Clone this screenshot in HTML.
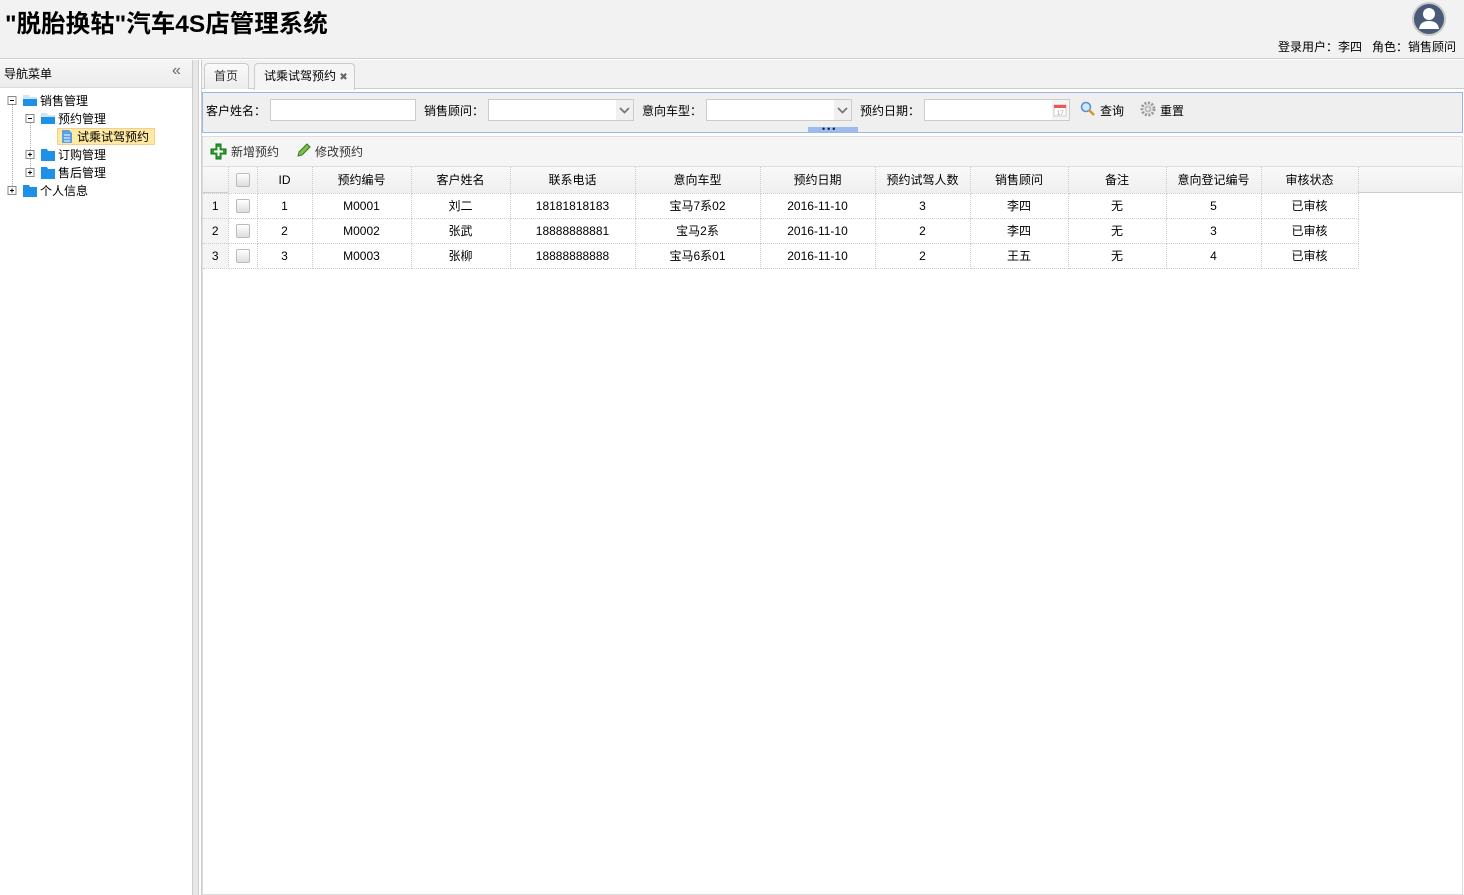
<!DOCTYPE html>
<html><head><meta charset="utf-8"><style>
*{margin:0;padding:0;box-sizing:border-box}
body{width:1464px;height:895px;overflow:hidden;background:#fff;font-family:"Liberation Sans","Noto Sans CJK SC",sans-serif;font-size:12px;color:#000;position:relative}
.a{position:absolute}
.tx{white-space:nowrap;line-height:14px}
.inp{position:absolute;background:#fff;border:1px solid #ccc;height:22px}
.dd{position:absolute;right:0;top:0;width:17px;height:20px;background:#f0f0f0}
table{border-collapse:collapse;position:absolute;left:203px;top:167px;font-size:12px}
td{border:1px dotted #ccc;text-align:center;height:25px;padding:0}
tr.h td{background:linear-gradient(#f9f9f9,#efefef);height:26px;border-top:none}
td.rn{background:#f4f4f4;border-left:none}
.ck{display:inline-block;width:14px;height:14px;border:1px solid #bbb;border-radius:2px;background:linear-gradient(#fff,#ddd);vertical-align:middle}
</style></head><body>
<div class="a" style="left:0;top:0;width:1464px;height:59px;background:#f2f2f2;border-bottom:1px solid #d0d0d0"></div>
<div class="a tx" style="left:5px;top:11px;font-size:24.5px;font-weight:bold;line-height:28px">"脱胎换轱"汽车4S店管理系统</div>
<svg class="a" style="left:1411px;top:1px" width="36" height="36"><circle cx="18" cy="18" r="17" fill="#c8c8c8"/><circle cx="18" cy="18" r="15" fill="#4b5b77"/><circle cx="18" cy="13" r="6" fill="#fff"/><path d="M8 28 Q9 20 18 20 Q27 20 28 28 Z" fill="#fff"/></svg>
<div class="a tx" style="left:1278px;top:40px">登录用户：李四&nbsp;&nbsp;&nbsp;角色：销售顾问</div>
<div class="a" style="left:0;top:60px;width:193px;height:835px;border-right:1px solid #ccc;background:#fff"></div>
<div class="a" style="left:0;top:60px;width:192px;height:28px;background:linear-gradient(#f6f6f6,#ececec);border-bottom:1px solid #ddd"></div>
<div class="a tx" style="left:4px;top:67px">导航菜单</div>
<div class="a tx" style="left:172px;top:64px;font-size:16px;color:#666">«</div>
<div class="a" style="left:193px;top:60px;width:6px;height:835px;background:#e8e8e8;border-right:1px solid #ccc"></div>
<div class="a" style="left:12px;top:104px;height:86px;border-left:1px dotted #aaa"></div>
<div class="a" style="left:30px;top:122px;height:50px;border-left:1px dotted #aaa"></div>
<svg class="a" style="left:0;top:90px" width="160" height="110">
<g fill="#fff" stroke="#888"><rect x="8" y="6.5" width="8" height="8"/><rect x="26" y="24.5" width="8" height="8"/><rect x="26" y="60.5" width="8" height="8"/><rect x="26" y="78.5" width="8" height="8"/><rect x="8" y="96.5" width="8" height="8"/></g>
<g stroke="#000"><path d="M10 10.5h4M28 28.5h4M28 64.5h4M30 62.5v4M28 82.5h4M30 80.5v4M10 100.5h4M12 98.5v4"/></g>
<g fill="#1e90e8"><path d="M23 5h6l1 2h7v9H23z" fill="#cfe4f6"/><rect x="23" y="9" width="14" height="7"/><path d="M41 23h6l1 2h7v9H41z" fill="#cfe4f6"/><rect x="41" y="27" width="14" height="7"/>
<path d="M41 59h6l1 2h7v10H41z"/><path d="M41 77h6l1 2h7v10H41z"/><path d="M23 95h6l1 2h7v10H23z"/></g>
</svg>
<div class="a" style="left:57px;top:128px;width:98px;height:17px;background:#ffe48d;border:1px solid #f4c36c;opacity:.8"></div>
<svg class="a" style="left:61px;top:129px" width="12" height="15"><path d="M1 1h7l3 3v10H1z" fill="#5aa0e6"/><path d="M3 6h6M3 9h6M3 12h6" stroke="#fff"/></svg>
<div class="a tx" style="left:40px;top:94px">销售管理</div>
<div class="a tx" style="left:58px;top:112px">预约管理</div>
<div class="a tx" style="left:77px;top:130px">试乘试驾预约</div>
<div class="a tx" style="left:58px;top:148px">订购管理</div>
<div class="a tx" style="left:58px;top:166px">售后管理</div>
<div class="a tx" style="left:40px;top:184px">个人信息</div>
<div class="a" style="left:201px;top:60px;width:1263px;height:835px;border-left:1px solid #ccc;background:#fff"></div>
<div class="a" style="left:202px;top:60px;width:1262px;height:29px;background:#f2f2f2;border-bottom:1px solid #ccc"></div>
<div class="a" style="left:204px;top:63px;width:45px;height:26px;background:linear-gradient(#fafafa,#ececec);border:1px solid #ccc;border-bottom:none;border-radius:4px 4px 0 0"></div>
<div class="a tx" style="left:214px;top:69px;color:#333">首页</div>
<div class="a" style="left:254px;top:63px;width:101px;height:27px;background:#f5f5f5;border:1px solid #ccc;border-bottom:none;border-radius:4px 4px 0 0"></div>
<div class="a tx" style="left:264px;top:69px">试乘试驾预约 <span style="font-size:10px;color:#666">✖</span></div>
<div class="a" style="left:202px;top:92px;width:1261px;height:41px;background:#efefef;border:1px solid #95b8e7"></div>
<div class="a" style="left:808px;top:127px;width:50px;height:5px;background:#9cbcf0"></div>
<div class="a tx" style="left:822px;top:122px;color:#124;font-size:9px;letter-spacing:2px">•••</div>
<div class="a tx" style="left:206px;top:104px">客户姓名：</div>
<div class="inp" style="left:270px;top:99px;width:146px"></div>
<div class="a tx" style="left:424px;top:104px">销售顾问：</div>
<div class="inp" style="left:488px;top:99px;width:146px"><div class="dd"></div><svg class="a" style="right:3px;top:5px" width="11" height="10"><path d="M1 3l4.5 4.5L10 3" fill="none" stroke="#777" stroke-width="1.8"/></svg></div>
<div class="a tx" style="left:642px;top:104px">意向车型：</div>
<div class="inp" style="left:706px;top:99px;width:146px"><div class="dd"></div><svg class="a" style="right:3px;top:5px" width="11" height="10"><path d="M1 3l4.5 4.5L10 3" fill="none" stroke="#777" stroke-width="1.8"/></svg></div>
<div class="a tx" style="left:860px;top:104px">预约日期：</div>
<div class="inp" style="left:924px;top:99px;width:146px"><div class="dd" style="background:#f5f5f5"></div><svg class="a" style="right:2px;top:3px" width="14" height="14"><rect x="1" y="2" width="12" height="11" fill="#fff" stroke="#ccc"/><rect x="1" y="2" width="12" height="3" fill="#e55"/><text x="4" y="12" font-size="6" fill="#999">17</text></svg></div>
<svg class="a" style="left:1080px;top:101px" width="16" height="16"><circle cx="6" cy="6" r="4.5" fill="#cde8ff" stroke="#5a8ec8" stroke-width="1.5"/><path d="M9 9l5 5" stroke="#d49a2a" stroke-width="2.5"/></svg>
<div class="a tx" style="left:1100px;top:104px">查询</div>
<svg class="a" style="left:1140px;top:101px" width="16" height="16"><circle cx="8" cy="8" r="6" fill="none" stroke="#999" stroke-width="3" stroke-dasharray="2 1.5"/><circle cx="8" cy="8" r="3.5" fill="#bbb"/><circle cx="8" cy="8" r="1.5" fill="#eee"/></svg>
<div class="a tx" style="left:1160px;top:104px">重置</div>
<div class="a" style="left:202px;top:136px;width:1261px;height:759px;border:1px solid #ddd;background:#fff"></div>
<div class="a" style="left:203px;top:137px;width:1259px;height:30px;background:#f5f5f5;border-bottom:1px solid #ddd"></div>
<svg class="a" style="left:210px;top:143px" width="17" height="17"><path d="M6 1h5v5h5v5h-5v5H6v-5H1V6h5z" fill="#2ca02c" stroke="#176d17"/><path d="M8.5 4v9M4 8.5h9" stroke="#fff" stroke-width="2"/></svg>
<div class="a tx" style="left:231px;top:145px;color:#333">新增预约</div>
<svg class="a" style="left:296px;top:143px" width="15" height="15"><path d="M2 13l1-4 8-8 3 3-8 8z" fill="#7cc04a" stroke="#3c7a1c"/></svg>
<div class="a tx" style="left:315px;top:145px;color:#333">修改预约</div>
<div class="a" style="left:203px;top:167px;width:1259px;height:26px;background:linear-gradient(#f9f9f9,#efefef);border-bottom:1px solid #ccc"></div>
<table>
<tr class="h"><td class="rn" style="width:25px;background:none"></td><td style="width:29px"><span class="ck"></span></td><td style="width:55px">ID</td><td style="width:99px">预约编号</td><td style="width:99px">客户姓名</td><td style="width:125px">联系电话</td><td style="width:125px">意向车型</td><td style="width:115px">预约日期</td><td style="width:95px">预约试驾人数</td><td style="width:98px">销售顾问</td><td style="width:98px">备注</td><td style="width:95px">意向登记编号</td><td style="width:97px">审核状态</td></tr>
<tr><td class="rn">1</td><td><span class="ck"></span></td><td>1</td><td>M0001</td><td>刘二</td><td>18181818183</td><td>宝马7系02</td><td>2016-11-10</td><td>3</td><td>李四</td><td>无</td><td>5</td><td>已审核</td></tr>
<tr><td class="rn">2</td><td><span class="ck"></span></td><td>2</td><td>M0002</td><td>张武</td><td>18888888881</td><td>宝马2系</td><td>2016-11-10</td><td>2</td><td>李四</td><td>无</td><td>3</td><td>已审核</td></tr>
<tr><td class="rn">3</td><td><span class="ck"></span></td><td>3</td><td>M0003</td><td>张柳</td><td>18888888888</td><td>宝马6系01</td><td>2016-11-10</td><td>2</td><td>王五</td><td>无</td><td>4</td><td>已审核</td></tr>
</table>
</body></html>
